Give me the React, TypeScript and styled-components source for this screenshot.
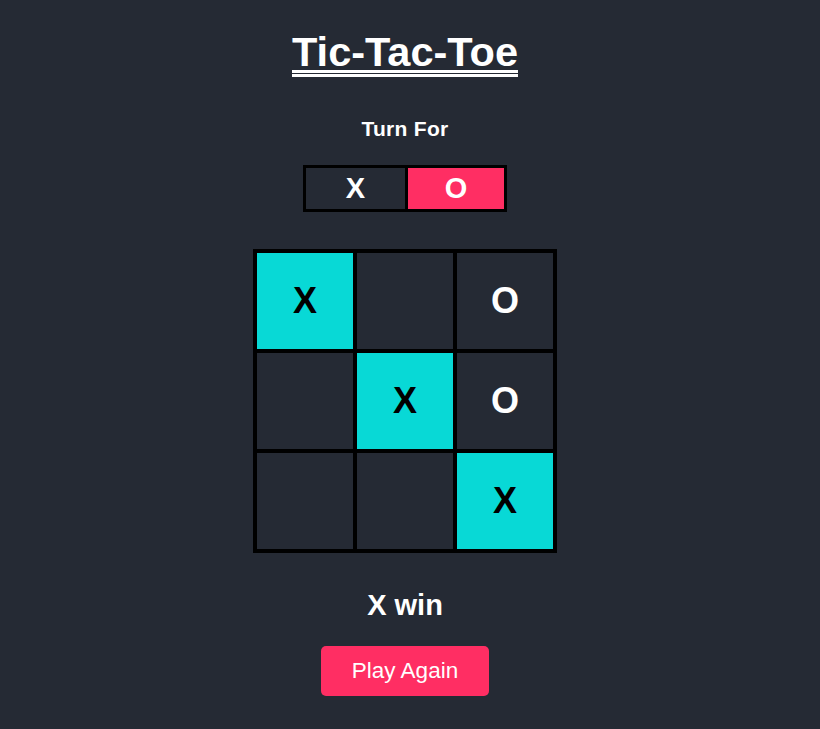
import React from "react";
import styled, { createGlobalStyle } from "styled-components";

const GlobalStyle = createGlobalStyle`
  html, body {
    margin: 0;
    padding: 0;
    background: #252a34;
  }
  body {
    font-family: "Liberation Sans", Arial, sans-serif;
    color: #ffffff;
  }
`;

const Page = styled.main`
  min-height: 729px;
  display: flex;
  flex-direction: column;
  align-items: center;
  padding: 28px 10px 0 0;
  box-sizing: border-box;
`;

const Title = styled.h1`
  margin: 0;
  font-size: 41.5px;
  font-weight: 700;
  line-height: 48px;
  text-decoration: underline double;
  text-decoration-thickness: 3px;
  text-underline-offset: 4px;
`;

const TurnLabel = styled.h3`
  margin: 41px 0 0;
  font-size: 21px;
  line-height: 24px;
  font-weight: 700;
  letter-spacing: 0.3px;
`;

const TurnBox = styled.div`
  margin-top: 24px;
  display: flex;
  border: 3px solid #000;
  height: 41px;
`;

const TurnCell = styled.div<{ $active: boolean; $w: number; $divider?: boolean }>`
  width: ${(p) => p.$w}px;
  height: 41px;
  display: flex;
  align-items: center;
  justify-content: center;
  font-size: 29px;
  font-weight: 700;
  background: ${(p) => (p.$active ? "#ff2e63" : "#252a34")};
  border-right: ${(p) => (p.$divider ? "3px solid #000" : "none")};
`;

const Board = styled.div`
  margin-top: 37px;
  display: grid;
  grid-template-columns: repeat(3, 96px);
  grid-template-rows: repeat(3, 96px);
  gap: 4px;
  padding: 4px;
  background: #000;
`;

const Square = styled.div<{ $win: boolean }>`
  display: flex;
  align-items: center;
  justify-content: center;
  font-size: 36px;
  font-weight: 700;
  background: ${(p) => (p.$win ? "#08d9d6" : "#252a34")};
  color: ${(p) => (p.$win ? "#000" : "#fff")};
`;

const Result = styled.h2`
  margin: 35px 0 0;
  font-size: 29px;
  line-height: 34px;
  font-weight: 700;
`;

const PlayButton = styled.button`
  margin-top: 24px;
  width: 168px;
  height: 50px;
  border: none;
  border-radius: 5px;
  background: #ff2e63;
  color: #fff;
  font-family: "Liberation Sans", Arial, sans-serif;
  font-size: 22.5px;
  cursor: pointer;
`;

const board = ["X", "", "O", "", "X", "O", "", "", "X"];
const winning = [0, 4, 8];

export default function App() {
  return (
    <>
      <GlobalStyle />
      <Page>
        <Title>Tic-Tac-Toe</Title>
        <TurnLabel>Turn For</TurnLabel>
        <TurnBox>
          <TurnCell $active={false} $w={99} $divider>
            X
          </TurnCell>
          <TurnCell $active={true} $w={96}>
            O
          </TurnCell>
        </TurnBox>
        <Board>
          {board.map((v, i) => (
            <Square key={i} $win={winning.includes(i)}>
              {v}
            </Square>
          ))}
        </Board>
        <Result>X win</Result>
        <PlayButton>Play Again</PlayButton>
      </Page>
    </>
  );
}
